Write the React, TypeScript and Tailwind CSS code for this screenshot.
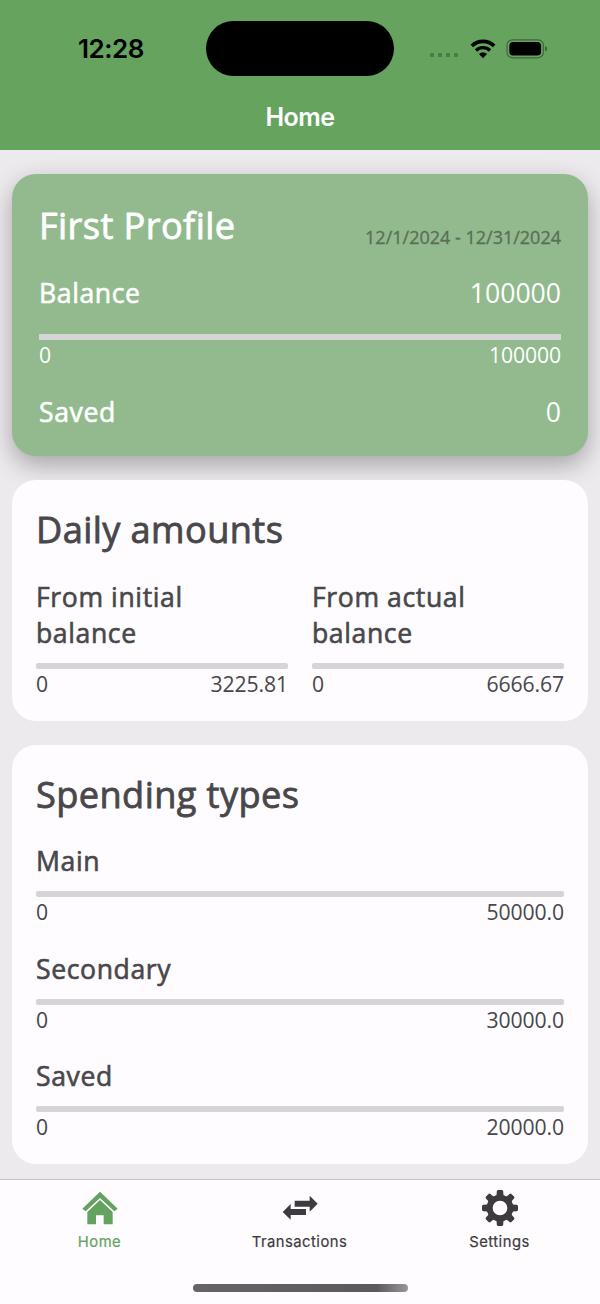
import type { ReactNode } from "react";

function StatusBar() {
  return (
    <div className="grid h-[97px] grid-cols-[206px_188px_1fr] items-center">
      <div className="pl-[78px] pt-px font-['Inter'] text-[26px] font-semibold leading-8 tracking-[-0.5px] text-black">12:28</div>
      <div className="h-[55px] rounded-full bg-black" />
      <div className="flex items-center pl-[36px]">
        <div className="mt-[13px] flex gap-1">
          <span className="size-1 rounded-[1px] bg-[#4a7b47]" />
          <span className="size-1 rounded-[1px] bg-[#4a7b47]" />
          <span className="size-1 rounded-[1px] bg-[#4a7b47]" />
          <span className="size-1 rounded-[1px] bg-[#4a7b47]" />
        </div>
        <svg className="ml-[12px] h-[20px] w-[26px]" viewBox="0 0 26 20" fill="none" stroke="black">
          <path d="M1.900 7a15.800 15.800 0 0 1 22.200 0" strokeWidth="3.700" />
          <path d="M6 11.500a10 10 0 0 1 14 0" strokeWidth="3.300" />
          <path d="M13 19.300l-4-4.300a5.600 5.600 0 0 1 8 0z" fill="black" stroke="none" />
        </svg>
        <svg className="ml-[10px] h-[20px] w-[43px]" viewBox="0 0 43 20">
          <rect x="1" y="0.8" width="36.4" height="18" rx="5.5" fill="none" stroke="#3d663b" strokeWidth="1.2" />
          <rect x="3.3" y="3" width="31.8" height="13.6" rx="3.8" fill="black" />
          <path d="M39 7v5.600q2.200-.8 2.200-2.800t-2.200-2.800" fill="#3d663b" />
        </svg>
      </div>
    </div>
  );
}

function Row({ label, value }: { label: string; value: string }) {
  return (
    <div className="flex justify-between text-[26.6px] leading-9">
      <span className="tracking-[0.6px] [-webkit-text-stroke:0.6px_currentColor]">{label}</span>
      <span>{value}</span>
    </div>
  );
}

function Range({ max }: { max: string }) {
  return (
    <div className="flex justify-between text-[21.2px] leading-[30px]">
      <span>0</span>
      <span className="tracking-[-0.1px]">{max}</span>
    </div>
  );
}

function Title({ children }: { children: ReactNode }) {
  return (
    <h2 className="text-[36.2px] leading-[48px] tracking-[0.4px] [-webkit-text-stroke:0.8px_currentColor]">{children}</h2>
  );
}

function Panel({ title, children }: { title: string; children: ReactNode }) {
  return (
    <section className="rounded-3xl bg-[#fefcff] px-6 pt-[25px]">
      <Title>{title}</Title>
      {children}
    </section>
  );
}

function Meter({ label, max }: { label: string; max: string }) {
  return (
    <div>
      <h3 className="max-w-[220px] pt-px text-[26.6px] leading-9 tracking-[0.6px] [-webkit-text-stroke:0.6px_currentColor]">{label}</h3>
      <div className="mt-3 h-1.5 rounded-[2px] bg-[#d5d4d7]" />
      <Range max={max} />
    </div>
  );
}

function Tab({ label, active, children }: { label: string; active?: boolean; children: ReactNode }) {
  return (
    <div className={`flex w-[200px] flex-col items-center pr-px pt-2.5 ${active ? "text-[#64a35f]" : "text-[#3d3b40]"}`}>
      {children}
      <span className="mt-1.5 font-['Inter'] text-[14.8px] leading-5 tracking-[0.48px] [-webkit-text-stroke:0.2px_currentColor]">{label}</span>
    </div>
  );
}

const teeth = [0, 45, 90, 135, 180, 225, 270, 315];

export default function App() {
  return (
    <div className="flex h-[1304px] w-[600px] flex-col overflow-hidden bg-[#eceaed] font-['Open_Sans',sans-serif] text-[#48474a]">
      <header className="h-[150px] shrink-0 bg-[#66a35f]">
        <StatusBar />
        <h1 className="text-center font-['Inter'] text-[25px] font-semibold leading-10 tracking-[-0.5px] text-white">Home</h1>
      </header>

      <main className="flex h-[1029px] shrink-0 flex-col gap-6 px-3 pt-6">
        <section className="h-[282px] rounded-3xl bg-[#92ba8e] px-[27px] pt-[27px] text-white shadow-[0_9px_24px_rgba(0,0,0,0.3)]">
          <div className="flex h-12 justify-between">
            <Title>First Profile</Title>
            <span className="pt-6 text-[18px] leading-6 text-[#587055] [-webkit-text-stroke:0.3px_currentColor]">12/1/2024 - 12/31/2024</span>
          </div>
          <div className="mt-[26px]">
            <Row label="Balance" value="100000" />
          </div>
          <div className="mt-[23px] h-1.5 bg-[#d5d4d7]" />
          <Range max="100000" />
          <div className="mt-6">
            <Row label="Saved" value="0" />
          </div>
        </section>

        <div className="relative grid grid-rows-[241px_419px] gap-6">
          <Panel title="Daily amounts">
            <div className="mt-[25px] grid grid-cols-2 gap-6">
              <Meter label="From initial balance" max="3225.81" />
              <Meter label="From actual balance" max="6666.67" />
            </div>
          </Panel>
          <Panel title="Spending types">
            <div className="mt-6 flex flex-col gap-[22.5px]">
              <Meter label="Main" max="50000.0" />
              <Meter label="Secondary" max="30000.0" />
              <Meter label="Saved" max="20000.0" />
            </div>
          </Panel>
        </div>
      </main>

      <nav className="flex grow flex-col border-t border-[#c4c2c5] bg-[#fefcff]">
        <div className="flex h-[104px]">
          <Tab label="Home" active>
            <svg className="h-9 w-9" viewBox="64 62 108 108" fill="currentColor">
              <path d="M118 67l53 51-10 8-43-40-43 40-10-8z" />
              <path d="M118 92l38 36v37h-27v-27h-23v27H80v-37z" />
            </svg>
          </Tab>
          <Tab label="Transactions">
            <svg className="h-9 w-9" viewBox="664 62 108 108" fill="currentColor">
              <path d="M702 94h45V79l24 24-24 24v-15h-45z" />
              <path d="M736 119h-46v-15l-24 24 24 23v-14h46z" />
            </svg>
          </Tab>
          <Tab label="Settings">
            <svg className="h-9 w-9" viewBox="-54 -54 108 108" fill="currentColor">
              <circle r="31" fill="none" stroke="currentColor" strokeWidth="18" />
              {teeth.map((angle) => (
                <path key={angle} transform={`rotate(${angle})`} d="M-14-34l3.500-4 1-12q.5-4 4-4h11q3.500 0 4 4l1 12 3.500 4z" />
              ))}
            </svg>
          </Tab>
        </div>
        <div className="h-2 w-[215px] self-center rounded-full bg-linear-to-r from-[#666467] via-[#5b595c] via-85% to-[#99979a]" />
      </nav>
    </div>
  );
}
